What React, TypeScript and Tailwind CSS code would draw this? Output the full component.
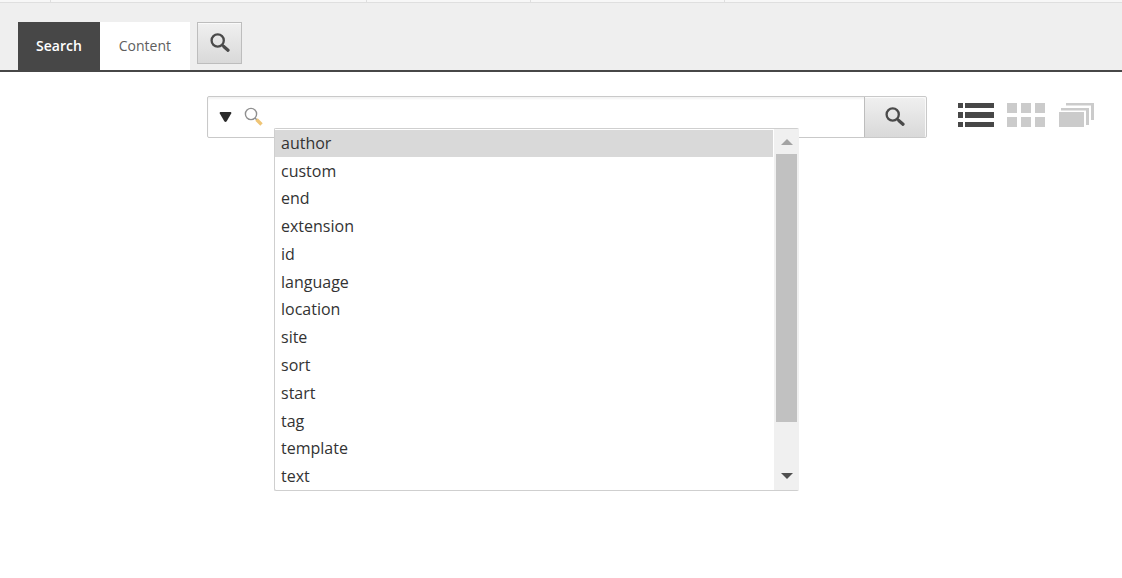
import { useState } from "react";

const filters = [
  "author", "custom", "end", "extension", "id", "language", "location",
  "site", "sort", "start", "tag", "template", "text",
];

export default function App() {
  const [view, setView] = useState("list");
  const [active, setActive] = useState("author");
  const [query, setQuery] = useState("");

  return (
    <div className="min-h-screen bg-white font-['Open_Sans',sans-serif] text-[#333]">
      <header className="border-b-2 border-[#474747] bg-[#efefef]">
        <div className="flex h-[3px] border-b border-[#dfdfdf] bg-[#f7f7f7]">
          <div className="w-[51px] border-r border-[#dfdfdf]" />
          <div className="w-[316px] border-r border-[#dfdfdf]" />
          <div className="w-[164px] border-r border-[#dfdfdf]" />
          <div className="w-[194px] border-r border-[#dfdfdf]" />
        </div>
        <nav className="flex items-start px-[18px] pt-[19px] text-sm">
          <button className="h-12 bg-[#474747] px-[18px] font-semibold text-white">Search</button>
          <button className="mr-[7px] h-12 bg-white px-[19px] text-[#5e5e5e]">Content</button>
          <button aria-label="New search" className="flex h-[42px] w-[45px] items-center justify-center border border-[#bdbdbd] bg-linear-to-b from-[#f0f0f0] to-[#d9d9d9] shadow-[inset_0_1px_0_#fafafa]">
            <SearchIcon />
          </button>
        </nav>
      </header>

      <main className="flex items-start pt-6 pr-[27px] pl-[207px]">
        <div className="relative flex h-[42px] flex-1 rounded-xs border border-[#c9c9c9] bg-white shadow-[inset_0_2px_2px_#f3f3f3]">
          <button aria-label="Search options" className="flex w-9 items-center justify-center">
            <svg width="14" height="12" viewBox="0 0 14 12" fill="#2b2b2b">
              <path d="M1.500 1h10q1.200 0 .7 1.400L7.700 10.200q-1.200 1.400-2.400 0L.8 2.400Q.3 1 1.500 1z" />
            </svg>
          </button>
          <div className="flex w-[26px] items-center pb-[2px]">
            <HandleIcon />
          </div>
          <input
            aria-label="Search query"
            value={query}
            onChange={e => setQuery(e.target.value)}
            className="min-w-0 flex-1 bg-transparent px-2 outline-none"
          />
          <button aria-label="Search" className="flex w-[62px] items-center justify-center rounded-r-xs border-l border-[#bdbdbd] bg-linear-to-b from-[#f0f0f0] to-[#d9d9d9] pr-[2px] shadow-[inset_-1px_1px_0_#fafafa]">
            <SearchIcon />
          </button>

          <div className="absolute top-[31px] right-[127px] left-[66px] flex rounded-xs border border-r-0 border-[#cfcfcf] bg-white">
            <ul role="listbox" aria-label="Search filters" className="mr-px grid h-[361px] flex-1 auto-rows-fr">
              {filters.map(f => (
                <li
                  key={f}
                  role="option"
                  aria-selected={active === f}
                  onMouseEnter={() => setActive(f)}
                  className={`flex items-center px-[6px] text-base leading-6 shadow-[inset_0_1px_0_#fff] ${active === f ? "bg-[#d9d9d9]" : ""}`}
                >
                  {f}
                </li>
              ))}
            </ul>
            <div className="flex w-[25px] flex-col items-center bg-[#f0f0f0]">
              <button aria-label="Scroll up" className="flex h-[25px] w-full items-center justify-center">
                <svg width="12" height="6" viewBox="0 0 12 6" fill="#a3a3a3"><path d="M6 0l6 6H0z" /></svg>
              </button>
              <div className="h-[268px] w-[21px] bg-[#c1c1c1]" />
              <button aria-label="Scroll down" className="mt-auto flex h-7 w-full items-center justify-center">
                <svg width="12" height="6" viewBox="0 0 12 6" fill="#505050"><path d="M0 0h12L6 6z" /></svg>
              </button>
            </div>
          </div>
        </div>

        <div className="ml-[30px] flex gap-3 pt-[6px]">
          <ViewButton label="List view" active={view === "list"} onClick={() => setView("list")}>
            <svg width="38" height="26" viewBox="0 0 38 26" fill="currentColor">
              <path d="M1 1h5v5H1zM8 1h29v5H8zM1 10h5v6H1zM8 10h29v6H8zM1 20h5v5H1zM8 20h29v5H8z" />
            </svg>
          </ViewButton>
          <ViewButton label="Tile view" active={view === "tile"} onClick={() => setView("tile")}>
            <svg width="38" height="26" viewBox="0 0 38 26" fill="currentColor">
              <path d="M0 1h10v10H0zM14 1h10v10H14zM28 1h10v10H28zM0 15h10v10H0zM14 15h10v10H14zM28 15h10v10H28z" />
            </svg>
          </ViewButton>
          <ViewButton label="Stack view" active={view === "stack"} onClick={() => setView("stack")}>
            <svg width="38" height="26" viewBox="0 0 38 26" fill="currentColor">
              <path d="M2 10h25v15H2zM4 6h28v17h-3V8.500H4zM9 1h28v17h-3V3.500H9z" />
            </svg>
          </ViewButton>
        </div>
      </main>
    </div>
  );
}

function ViewButton({ label, active, onClick, children }: any) {
  return (
    <button aria-label={label} aria-pressed={active} onClick={onClick} className={active ? "text-[#474747]" : "text-[#cbcbcb]"}>
      {children}
    </button>
  );
}

function SearchIcon() {
  return (
    <svg width="20" height="20" viewBox="0 0 20 20" fill="none" stroke="#4a4a4a">
      <circle cx="7.700" cy="7.500" r="6.100" strokeWidth="2.300" />
      <path d="M12 11.700l2 2" strokeWidth="2.400" />
      <path d="M14 13.700l4 3.600" strokeWidth="3.200" strokeLinecap="round" />
    </svg>
  );
}

function HandleIcon() {
  return (
    <svg width="19" height="19" viewBox="0 0 19 19" fill="none">
      <circle cx="7" cy="7" r="5.600" stroke="#8f8f8f" strokeWidth="1.400" />
      <path d="M11 11l2 2" stroke="#8f8f8f" strokeWidth="1.400" />
      <path d="M12.500 12.500l5 5" stroke="#efc576" strokeWidth="3.400" />
    </svg>
  );
}
